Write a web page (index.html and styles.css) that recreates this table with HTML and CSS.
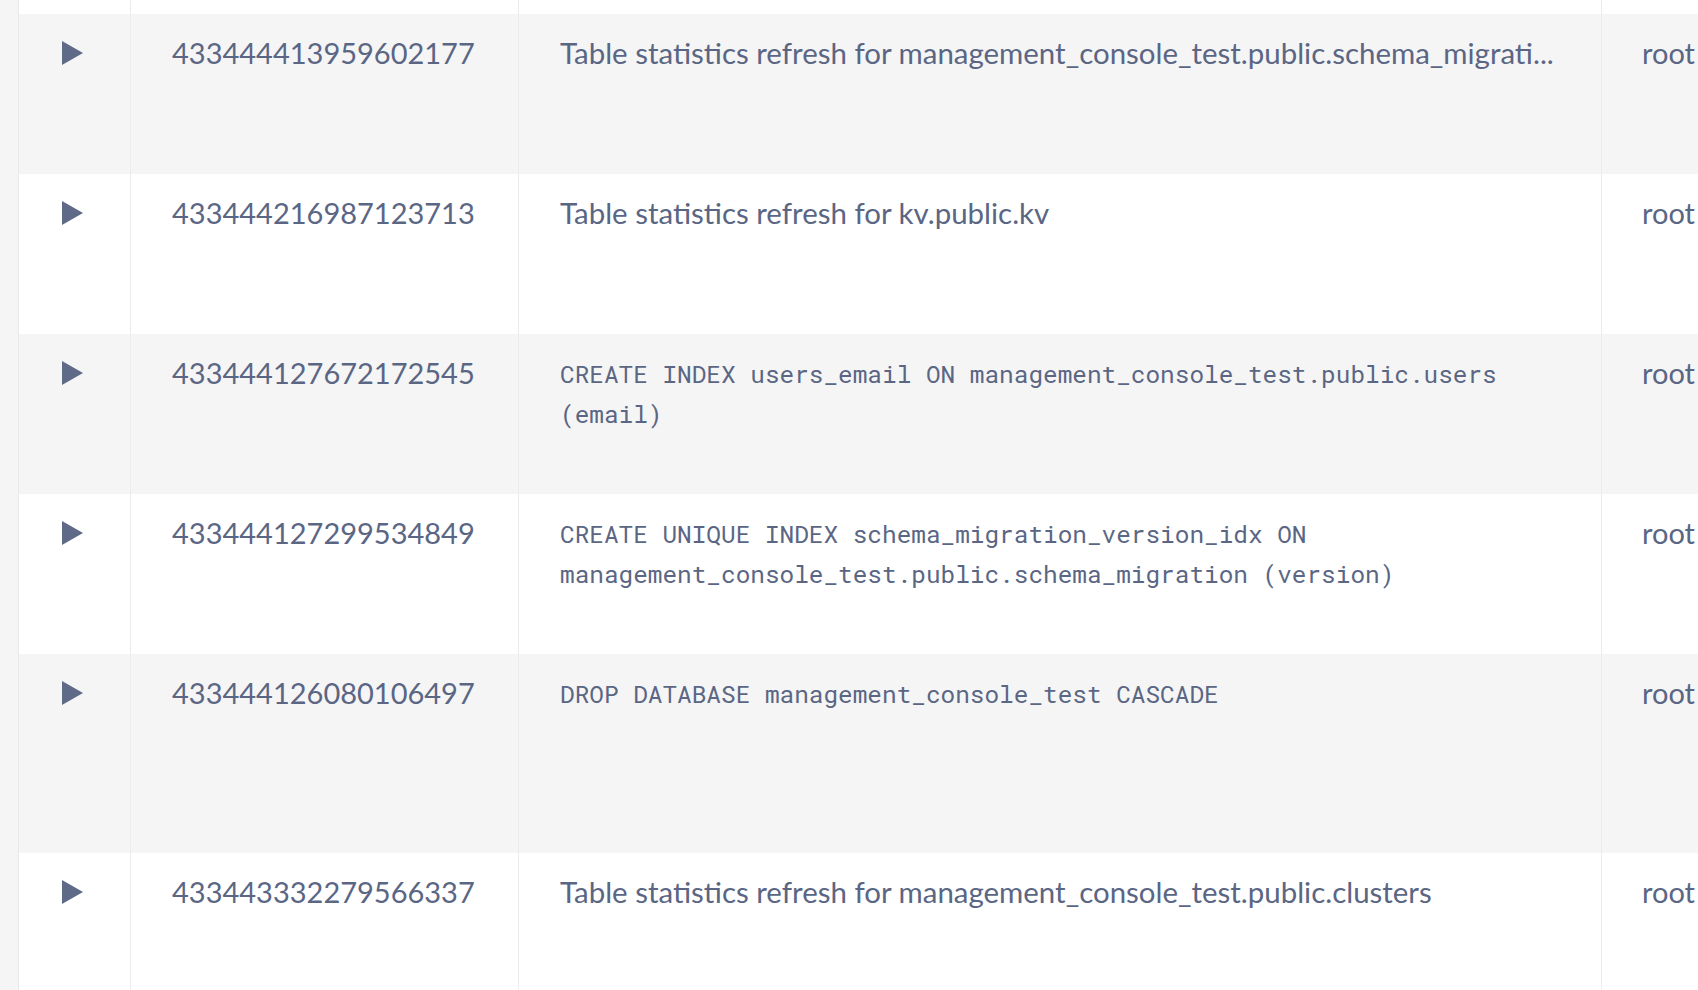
FILE: index.html
```html
<!DOCTYPE html>
<html>
<head>
<meta charset="utf-8">
<link rel="stylesheet" href="styles.css">
</head>
<body>
<div class="page">
  <div class="strip"></div>
  <div class="jobs">
    <div class="row partial">
      <div class="cell c-toggle"></div><div class="cell c-id"></div><div class="cell c-desc"></div><div class="cell c-user"></div>
    </div>
    <div class="row alt">
      <div class="cell c-toggle"><span class="tri"></span></div>
      <div class="cell c-id">433444413959602177</div>
      <div class="cell c-desc">Table statistics refresh for management_console_test.public.schema_migrati...</div>
      <div class="cell c-user">root</div>
    </div>
    <div class="row">
      <div class="cell c-toggle"><span class="tri"></span></div>
      <div class="cell c-id">433444216987123713</div>
      <div class="cell c-desc">Table statistics refresh for kv.public.kv</div>
      <div class="cell c-user">root</div>
    </div>
    <div class="row alt">
      <div class="cell c-toggle"><span class="tri"></span></div>
      <div class="cell c-id">433444127672172545</div>
      <div class="cell c-desc"><code class="sql">CREATE INDEX users_email ON management_console_test.public.users (email)</code></div>
      <div class="cell c-user">root</div>
    </div>
    <div class="row">
      <div class="cell c-toggle"><span class="tri"></span></div>
      <div class="cell c-id">433444127299534849</div>
      <div class="cell c-desc"><code class="sql">CREATE UNIQUE INDEX schema_migration_version_idx ON management_console_test.public.schema_migration (version)</code></div>
      <div class="cell c-user">root</div>
    </div>
    <div class="row alt tall">
      <div class="cell c-toggle"><span class="tri"></span></div>
      <div class="cell c-id">433444126080106497</div>
      <div class="cell c-desc"><code class="sql">DROP DATABASE management_console_test CASCADE</code></div>
      <div class="cell c-user">root</div>
    </div>
    <div class="row">
      <div class="cell c-toggle"><span class="tri"></span></div>
      <div class="cell c-id">433443332279566337</div>
      <div class="cell c-desc">Table statistics refresh for management_console_test.public.clusters</div>
      <div class="cell c-user">root</div>
    </div>
  </div>
</div>
</body>
</html>
```

FILE: styles.css
```css
html, body {
  margin: 0;
  padding: 0;
  background: #ffffff;
  overflow: hidden;
}

.page {
  display: flex;
  width: 1698px;
  height: 990px;
  overflow: hidden;
}

.strip {
  flex: 0 0 18px;
  background: #f5f5f5;
  border-right: 1px solid #e9e9e9;
}

.jobs {
  flex: 0 0 auto;
  display: flex;
  flex-direction: column;
  font-family: Lato, "Open Sans", sans-serif;
  font-size: 29px;
  line-height: 40px;
  color: #5a6684;
}

.row {
  flex: 0 0 auto;
  display: grid;
  grid-template-columns: 112px 388px 1083px 300px;
  height: 160px;
  background: #ffffff;
}

.row.alt {
  background: #f5f5f5;
}

.row.tall {
  height: 199px;
}

.row.partial {
  height: 14px;
}

.cell {
  border-right: 1px solid #ececec;
  padding: 19px 41px 0 41px;
  box-sizing: border-box;
  min-width: 0;
}

.c-toggle {
  padding: 27px 0 0 43px;
}

.tri {
  display: block;
  width: 0;
  height: 0;
  border-top: 12.5px solid transparent;
  border-bottom: 12.5px solid transparent;
  border-left: 21px solid #5e6a87;
}

.c-desc {
  padding-right: 42px;
  font-size: 29.45px;
}

.c-user {
  padding-left: 40px;
}

.sql {
  display: block;
  margin-top: 1px;
  font-family: "Roboto Mono", "DejaVu Sans Mono", monospace;
  font-size: 24.4px;
  line-height: 40px;
  color: #5a6684;
}
```
